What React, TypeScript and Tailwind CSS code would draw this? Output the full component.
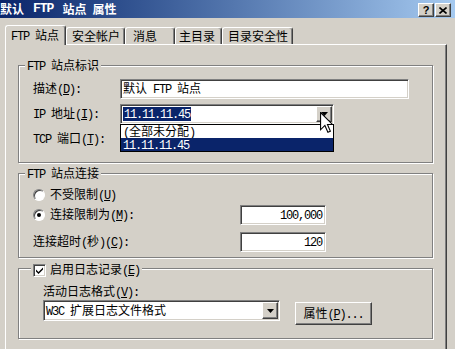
import React from 'react';

const sunken =
  "bg-white border border-t-[#808080] border-l-[#808080] border-b-white border-r-white shadow-[inset_1px_1px_0_#404040,inset_-1px_-1px_0_#d4d0c8]";
const raised =
  "bg-[#d4d0c8] border border-t-white border-l-white border-b-[#404040] border-r-[#404040] shadow-[inset_-1px_-1px_0_#808080]";

// ascii runs get a narrow mono face so they are half the width of a CJK glyph
function T({ s }: { s: string }) {
  const parts = s.split(/([\x20-\x7e]+)/).filter(Boolean);
  return (
    <span>
      {parts.map((p, i) =>
        /^[\x20-\x7e]+$/.test(p) ? (
          <span key={i} className="font-['Liberation_Mono',monospace] text-[12px] tracking-[-1.2px]">
            {p}
          </span>
        ) : (
          <span key={i}>{p}</span>
        )
      )}
    </span>
  );
}

// "&X" marks the access key
function L({ text }: { text: string }) {
  const i = text.indexOf('&');
  if (i < 0) return <T s={text} />;
  return (
    <span className="whitespace-nowrap">
      <T s={text.slice(0, i)} />
      <u className="underline-offset-[1px]">
        <T s={text[i + 1]} />
      </u>
      <T s={text.slice(i + 2)} />
    </span>
  );
}

function DropBtn() {
  return (
    <div className={`w-[16px] h-full flex items-center justify-center ${raised}`}>
      <svg width="7" height="4" viewBox="0 0 7 4">
        <path d="M0 0h7L3.5 4z" fill="black" />
      </svg>
    </div>
  );
}

function Radio({ on }: { on?: boolean }) {
  return (
    <div className="w-[12px] h-[12px] rounded-full bg-white border border-t-[#808080] border-l-[#808080] border-b-white border-r-white shadow-[inset_1px_1px_0_#404040] flex items-center justify-center">
      {on && <div className="w-[4px] h-[4px] rounded-full bg-black" />}
    </div>
  );
}

function Group({
  legend,
  className,
  children,
}: {
  legend: React.ReactNode;
  className: string;
  children: React.ReactNode;
}) {
  return (
    <div
      className={`relative ml-[12px] w-[415px] border border-[#808080] shadow-[1px_1px_0_#fff,inset_1px_1px_0_#fff] ${className}`}
    >
      {legend}
      {children}
    </div>
  );
}

const tabs = [
  { label: '安全帐户', cls: 'w-[59px] pl-[5px]' },
  { label: '消息', cls: 'w-[50px] pl-[7px]' },
  { label: '主目录', cls: 'w-[47px] pl-[3px]' },
  { label: '目录安全性', cls: 'w-[71px] pl-[5px]' },
];

export default function App() {
  return (
    <div className="relative w-[455px] h-[349px] overflow-hidden bg-[#d4d0c8] text-black text-[12px] leading-[14px] font-['Noto_Sans_CJK_SC',sans-serif] flex flex-col">
      {/* title bar */}
      <div className="h-[18px] shrink-0 flex items-start bg-linear-to-r from-[#0a246a] to-[#a6caf0] text-white font-bold">
        <div className="flex items-center h-[18px] leading-[18px] whitespace-nowrap">
          <span>默认</span>
          <span className="ml-[9px] font-['Liberation_Mono',monospace] text-[13px] tracking-[-1px]">FTP</span>
          <span className="ml-[9px]">站点</span>
          <span className="ml-[6px]">属性</span>
        </div>
        <div className="ml-auto mr-[4px] mt-[3px] flex gap-[1px]">
          <div className={`w-[16px] h-[14px] flex items-center justify-center text-black text-[11px] leading-[11px] font-bold font-['Liberation_Sans',sans-serif] ${raised}`}>
            ?
          </div>
          <div className={`w-[16px] h-[14px] flex items-center justify-center ${raised}`}>
            <svg width="8" height="7" viewBox="0 0 8 7">
              <path d="M0.5 0.5L7.5 6.5M7.5 0.5L0.5 6.5" stroke="black" strokeWidth="1.6" />
            </svg>
          </div>
        </div>
      </div>

      {/* tab strip */}
      <div className="h-[26px] shrink-0 flex items-end pl-[5px]">
        <div className="relative z-10 -mb-px h-[20px] w-[61px] pl-[5px] flex items-center bg-[#d4d0c8] border-t border-l border-r border-t-white border-l-white border-r-[#404040] shadow-[inset_-1px_0_0_#808080] rounded-t-[3px] whitespace-nowrap">
          <T s="FTP 站点" />
        </div>
        {tabs.map((t) => (
          <div
            key={t.label}
            className={`h-[17px] flex items-center border-t border-l border-r border-t-white border-l-white border-r-[#404040] shadow-[inset_-1px_0_0_#808080] rounded-t-[3px] whitespace-nowrap ${t.cls}`}
          >
            {t.label}
          </div>
        ))}
      </div>

      {/* tab page */}
      <div className="ml-[5px] w-[442px] flex-1 flex flex-col border-t border-l border-r border-t-white border-l-white border-r-[#404040] shadow-[inset_-1px_0_0_#808080]">
        {/* FTP 站点标识 */}
        <Group
          className="mt-[20px] h-[98px] pt-[13px]"
          legend={
            <div className="absolute -top-[7px] left-[6px] px-[2px] bg-[#d4d0c8] leading-[12px] whitespace-nowrap">
              <T s="FTP 站点标识" />
            </div>
          }
        >
          <div className="flex flex-col gap-[5px] pl-[14px]">
            <div className="h-[20px] flex items-center">
              <div className="w-[87px]">
                <L text="描述(&D):" />
              </div>
              <div className={`w-[289px] h-[20px] pl-[2px] flex items-center whitespace-nowrap ${sunken}`}>
                <T s="默认 FTP 站点" />
              </div>
            </div>
            <div className="h-[20px] flex items-center">
              <div className="w-[87px]">
                <L text="IP 地址(&I):" />
              </div>
              <div className="relative z-20">
                <div className={`w-[214px] h-[20px] p-[1px] flex ${sunken}`}>
                  <div className="flex-1 flex items-center pl-[1px]">
                    <div className="bg-[#0a246a] text-white h-[14px] flex items-center px-[1px]">
                      <T s="11.11.11.45" />
                    </div>
                  </div>
                  <DropBtn />
                </div>
                <div className="absolute top-full left-0 w-[214px] h-[28px] bg-white border border-black flex flex-col">
                  <div className="h-[13px] pl-[2px] flex items-center whitespace-nowrap">
                    <T s="(全部未分配)" />
                  </div>
                  <div className="h-[13px] pl-[2px] flex items-center bg-[#0a246a] text-white">
                    <T s="11.11.11.45" />
                  </div>
                </div>
              </div>
            </div>
            <div className="h-[20px] flex items-center">
              <div className="w-[87px]">
                <L text="TCP 端口(&T):" />
              </div>
              <div className={`w-[72px] h-[20px] ${sunken}`} />
            </div>
          </div>
        </Group>

        {/* FTP 站点连接 */}
        <Group
          className="mt-[10px] h-[85px] pt-[13px]"
          legend={
            <div className="absolute -top-[7px] left-[6px] px-[2px] bg-[#d4d0c8] leading-[12px] whitespace-nowrap">
              <T s="FTP 站点连接" />
            </div>
          }
        >
          <div className="pl-[14px] flex flex-col">
            <div className="h-[16px] flex items-center gap-[5px]">
              <Radio />
              <L text="不受限制(&U)" />
            </div>
            <div className="mt-[2px] h-[20px] flex items-center">
              <div className="w-[207px] flex items-center gap-[5px]">
                <Radio on />
                <L text="连接限制为(&M):" />
              </div>
              <div className={`w-[86px] h-[20px] pr-[3px] flex items-center justify-end ${sunken}`}>
                <T s="100,000" />
              </div>
            </div>
            <div className="mt-[7px] h-[20px] flex items-center">
              <div className="w-[207px]">
                <L text="连接超时(秒)(&C):" />
              </div>
              <div className={`w-[86px] h-[20px] pr-[3px] flex items-center justify-end ${sunken}`}>
                <T s="120" />
              </div>
            </div>
          </div>
        </Group>

        {/* 日志 */}
        <Group
          className="mt-[10px] h-[71px] pt-[15px]"
          legend={
            <div className="absolute -top-[6px] left-[12px] h-[14px] px-[2px] bg-[#d4d0c8] flex items-center gap-[4px] whitespace-nowrap">
              <div className={`w-[13px] h-[13px] flex items-center justify-center ${sunken}`}>
                <svg width="7" height="7" viewBox="0 0 7 7">
                  <path d="M0 2.5L2.5 5L7 0.5V2.5L2.5 7L0 4.5z" fill="black" />
                </svg>
              </div>
              <L text="启用日志记录(&E)" />
            </div>
          }
        >
          <div className="pl-[24px] flex flex-col">
            <div className="h-[13px] leading-[13px]">
              <L text="活动日志格式(&V):" />
            </div>
            <div className="mt-[3px] flex items-start">
              <div className={`w-[237px] h-[21px] p-[1px] flex ${sunken}`}>
                <div className="flex-1 flex items-center pl-[1px] whitespace-nowrap">
                  <T s="W3C 扩展日志文件格式" />
                </div>
                <DropBtn />
              </div>
              <div className={`ml-[15px] mt-[2px] w-[77px] h-[23px] flex items-center justify-center ${raised}`}>
                <L text="属性(&P)..." />
              </div>
            </div>
          </div>
        </Group>
      </div>

      {/* mouse pointer */}
      <svg
        className="absolute left-[320px] top-[112px] z-30"
        width="13"
        height="21"
        viewBox="0 0 12 19.5"
      >
        <path
          d="M0.5 0.5L0.5 16.5L4.5 12.5L7.3 18.8L9.6 17.8L6.9 11.6L11.5 11.6Z"
          fill="white"
          stroke="black"
          strokeWidth="1"
        />
      </svg>
    </div>
  );
}
